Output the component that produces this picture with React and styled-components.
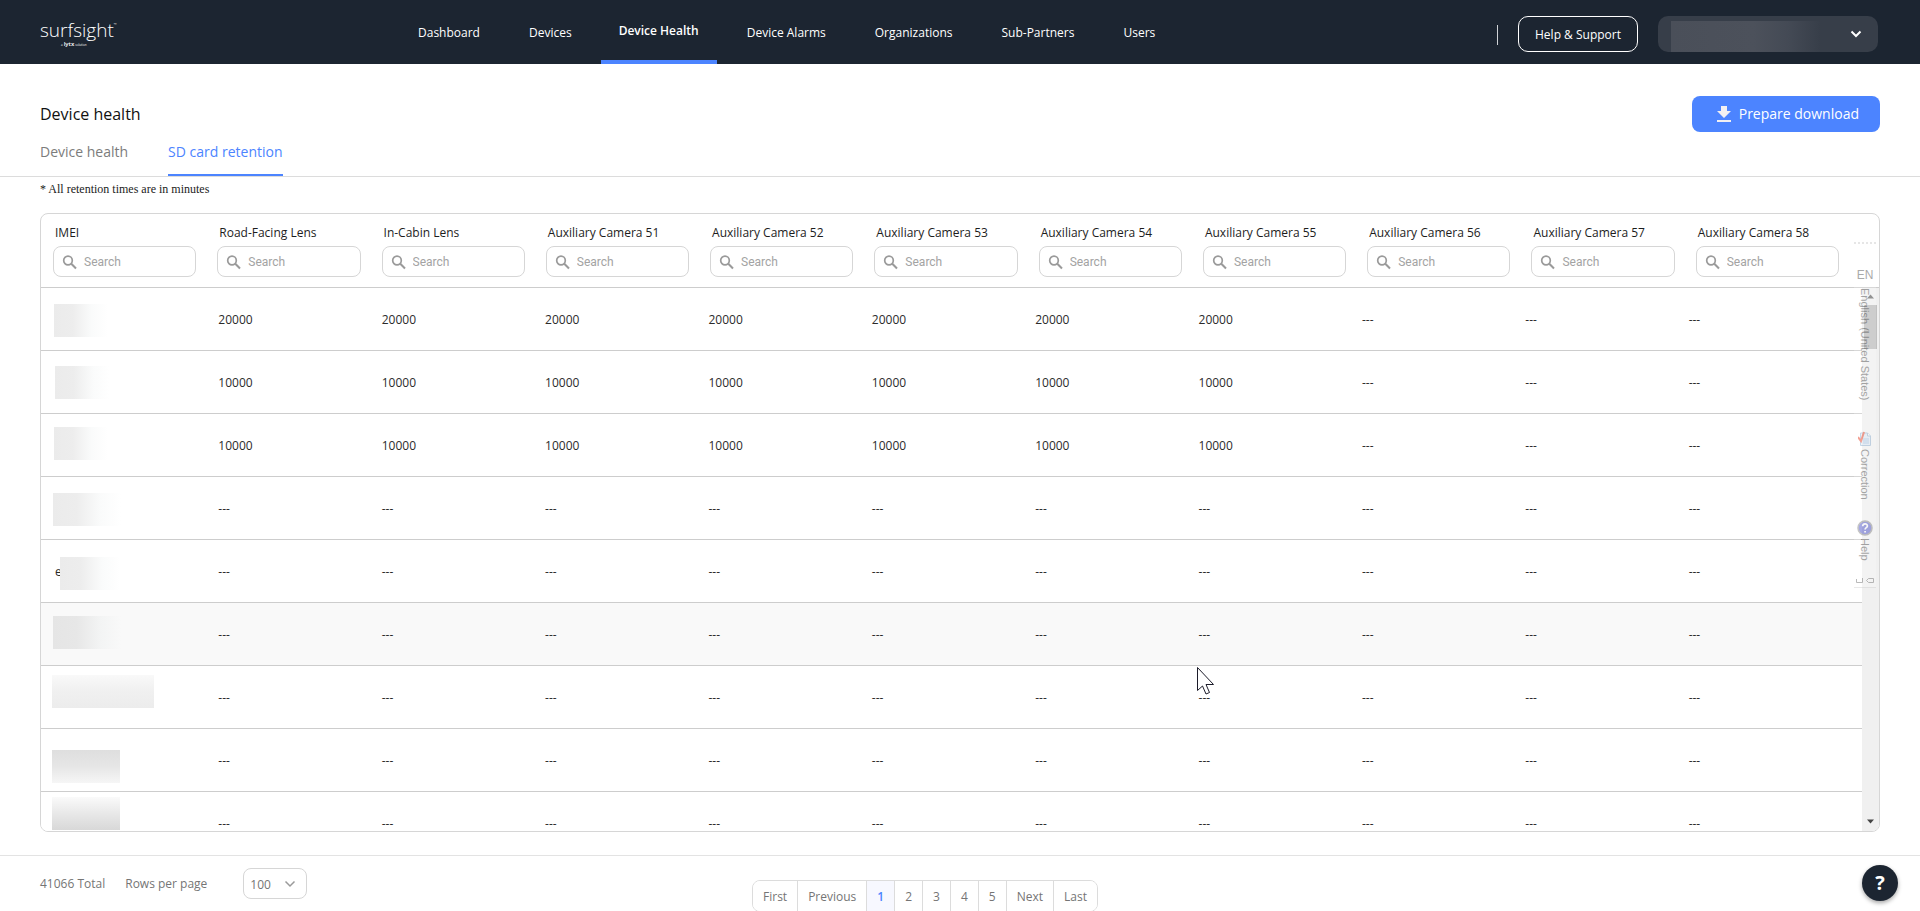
import React from "react";
import styled, { createGlobalStyle, css } from "styled-components";

const Global = createGlobalStyle`
  * { box-sizing: border-box; }
  html, body, #root { height: 100%; }
  body {
    margin: 0;
    overflow: hidden;
    background: #fff;
    color: #2b2b2b;
    font-family: "Open Sans", "Noto Sans", sans-serif;
    font-size: 12px;
  }
  button, input, select { font: inherit; color: inherit; }
`;

const Page = styled.div`
  position: relative;
  display: flex;
  flex-direction: column;
  height: 100vh;
  overflow: hidden;
`;

/* Top bar */
const TopBar = styled.header`
  display: flex;
  flex: none;
  align-items: center;
  height: 64px;
  padding: 0 42px 0 40px;
  background: #1c2531;
  color: #fff;
`;
const LogoLink = styled.a`
  display: flex;
  flex-direction: column;
  width: 359px;
  padding-top: 4px;
  color: #fff;
  text-decoration: none;
`;
const LogoWord = styled.span`
  display: flex;
  align-items: flex-start;
  height: 21px;
  font-size: 19px;
  font-weight: 300;
  line-height: 20px;
`;
const LogoMark = styled.span`
  font-size: 4px;
  line-height: 10px;
`;
const LogoTagline = styled.span`
  display: flex;
  align-items: baseline;
  gap: 1px;
  padding-left: 21px;
  font-size: 3px;
  line-height: 6px;
  b { font-size: 6px; font-weight: 600; }
`;
const Nav = styled.nav`
  display: flex;
  flex: 1;
  align-self: stretch;
  gap: 10px;
`;
const NavLink = styled.a`
  display: flex;
  align-items: center;
  padding: 1px 19px 0 20px;
  color: #fff;
  font-size: 12px;
  font-weight: 500;
  text-decoration: none;
  &:first-child { padding-left: 19px; }
  ${(p) =>
    p.$active &&
    css`
      padding: 1px 18px 0;
      border-bottom: 4px solid #4c84ff;
      font-weight: 600;
    `}
`;
const BarDivider = styled.span`
  width: 1px;
  height: 20px;
  margin: 6px 20px 0 0;
  background: #cfd2d6;
`;
const HelpButton = styled.button`
  width: 120px;
  height: 36px;
  margin: 4px 20px 0 0;
  border: 1px solid #fff;
  border-radius: 10px;
  background: transparent;
  font-size: 12px;
  font-weight: 500;
`;
const AccountButton = styled.button`
  display: flex;
  align-items: flex-end;
  justify-content: space-between;
  width: 220px;
  height: 36px;
  margin-top: 4px;
  padding: 0 16px 0 13px;
  border: 0;
  border-radius: 10px;
  background: #373e49;
  svg { align-self: center; }
`;
const AccountMask = styled.span`
  width: 150px;
  height: 31px;
  background: linear-gradient(90deg, #4a4f59 0%, #4c515b 55%, #444a55 78%, #373e49 100%);
`;

/* Heading */
const Heading = styled.section`
  display: flex;
  flex: none;
  align-items: flex-start;
  justify-content: space-between;
  height: 113px;
  padding: 32px 40px 0;
  border-bottom: 1px solid #dcdcdc;
`;
const Title = styled.h1`
  margin: 7px 0 0;
  color: #111;
  font-size: 16px;
  font-weight: 400;
  line-height: 22px;
`;
const Tabs = styled.div`
  display: flex;
  gap: 40px;
  height: 51px;
  align-items: stretch;
`;
const Tab = styled.a`
  padding-top: 17px;
  border-bottom: 2px solid ${(p) => (p.$active ? "#4c84ff" : "transparent")};
  color: ${(p) => (p.$active ? "#4c84ff" : "#7c7c7c")};
  font-size: 14px;
  line-height: 20px;
  text-decoration: none;
`;
const DownloadButton = styled.button`
  display: flex;
  align-items: center;
  gap: 8px;
  height: 36px;
  padding: 0 21px 0 25px;
  border: 0;
  border-radius: 8px;
  background: #4c84ff;
  color: #fff;
  font-size: 14px;
  line-height: 20px;
`;

/* Table */
const Note = styled.p`
  flex: none;
  margin: 4px 40px 16px;
  color: #222;
  font-family: "Liberation Serif", serif;
  font-size: 12px;
  line-height: 16px;
`;
const Card = styled.section`
  display: flex;
  flex: 1;
  flex-direction: column;
  min-height: 0;
  margin: 0 40px 23px;
  border: 1px solid #d6d6d6;
  border-radius: 8px;
  overflow: hidden;
`;
const HeadTable = styled.table`
  display: block;
  flex: none;
  border-bottom: 1px solid #cdcdcd;
  thead { display: block; }
`;
const HeadRow = styled.tr`
  display: grid;
  grid-template-columns: repeat(11, minmax(0, 1fr));
  height: 73px;
  padding-right: 31px;
`;
const HeadCell = styled.th`
  padding: 10px 9px 0 12px;
  color: #1d1d1d;
  text-align: left;
  font-size: 12px;
  font-weight: 500;
  line-height: 18px;
  label { display: block; padding-left: 2px; white-space: nowrap; }
`;
const SearchBox = styled.div`
  display: flex;
  align-items: center;
  gap: 6px;
  height: 31px;
  margin-top: 4px;
  padding: 0 8px;
  border: 1px solid #d6d6d6;
  border-radius: 8px;
  svg { flex: none; }
  input {
    flex: 1;
    min-width: 0;
    padding: 0;
    border: 0;
    outline: 0;
    background: transparent;
    font-family: Roboto, sans-serif;
    font-size: 12px;
    font-weight: 400;
  }
  input::placeholder { color: #a3a3a3; opacity: 1; }
`;
const ScrollArea = styled.div`
  display: flex;
  flex: 1;
  min-height: 0;
`;
const BodyTable = styled.table`
  display: block;
  flex: 1;
  overflow: hidden;
  tbody { display: block; }
`;
const BodyRow = styled.tr`
  display: grid;
  grid-template-columns: repeat(11, minmax(0, 1fr));
  height: 63px;
  padding-right: 24px;
  border-bottom: 1px solid #cdcdcd;
  background: ${(p) => (p.$hover ? "#f9f9f9" : "#fff")};
`;
const Cell = styled.td`
  position: relative;
  display: flex;
  align-items: center;
  padding: 0 0 0 14px;
  color: #2b2b2b;
  font-size: 12px;
`;
const fades = {
  right: "linear-gradient(90deg, #ebebeb 0%, #ededed 35%, #fafbfb 70%, rgba(255,255,255,0) 100%)",
  rightDark: "linear-gradient(90deg, #e5e5e5 0%, #e7e7e7 35%, #f3f4f4 70%, rgba(249,249,249,0) 100%)",
  up: "linear-gradient(0deg, #ececec 0%, #f0f0f0 50%, #f9f9f9 100%)",
  down: "linear-gradient(180deg, #dedede 0%, #e6e6e6 50%, #f6f6f6 100%)",
  upDark: "linear-gradient(0deg, #d8d8d8 0%, #e8e8e8 50%, #fafafa 100%)",
};
const Mask = styled.span`
  position: absolute;
  top: ${(p) => p.$top}px;
  left: ${(p) => p.$left}px;
  width: ${(p) => p.$width}px;
  height: 33px;
  background: ${(p) => fades[p.$fade]};
`;
const Scrollbar = styled.div`
  display: flex;
  flex: none;
  flex-direction: column;
  align-items: center;
  width: 17px;
  padding: 6px 0 7px;
  background: #f0f0f0;
`;
const Thumb = styled.div`
  width: 13px;
  height: 44px;
  margin: 6px 0 auto;
  background: #c1c1c1;
`;

/* Floating writing-aid bar */
const SideBar = styled.aside`
  position: absolute;
  top: 242px;
  right: 44px;
  display: flex;
  flex-direction: column;
  align-items: center;
  width: 22px;
  height: 346px;
  border-top: 2px dotted #cfcfcf;
  border-bottom: 1px solid #d4d4d4;
  background: rgba(255, 255, 255, 0.4);
  color: #555;
  font-family: "Liberation Sans", sans-serif;
  font-size: 12px;
  opacity: 0.5;
`;
const SideLang = styled.span`
  margin: 24px 0 4px;
  line-height: 14px;
`;
const SideText = styled.span`
  height: ${(p) => p.$height}px;
  padding-top: 2px;
  font-size: 11px;
  line-height: 16px;
  writing-mode: vertical-rl;
  white-space: nowrap;
`;

const Pointer = styled.svg`
  position: absolute;
  top: 666px;
  left: 1196px;
`;

/* Footer */
const Footer = styled.footer`
  display: flex;
  flex: none;
  align-items: flex-start;
  height: 56px;
  padding: 12px 40px 0;
  border-top: 1px solid #e3e3e3;
  color: #757575;
  font-size: 12px;
`;
const FooterLeft = styled.div`
  display: flex;
  flex: 1;
  align-items: center;
  gap: 20px;
`;
const RowsSelect = styled.div`
  position: relative;
  display: flex;
  align-items: center;
  margin-left: 16px;
  select {
    width: 64px;
    height: 31px;
    padding: 1px 0 0 6px;
    appearance: none;
    border: 1px solid #d6d6d6;
    border-radius: 8px;
    background: transparent;
  }
  svg { position: absolute; right: 11px; pointer-events: none; }
`;
const Pages = styled.nav`
  display: flex;
  height: 32px;
  margin-top: 12px;
  border: 1px solid #dcdcdc;
  border-radius: 8px;
  overflow: hidden;
`;
const PageButton = styled.button`
  padding: 0 10px;
  border: 0;
  border-left: 1px solid #dcdcdc;
  background: ${(p) => (p.$active ? "#f7f8ff" : "#fff")};
  color: ${(p) => (p.$active ? "#4c84ff" : "#757575")};
  font-weight: ${(p) => (p.$active ? 600 : 400)};
  &:first-child { border-left: 0; }
`;
const FooterRight = styled.div`
  flex: 1;
  margin-right: 70px;
`;
const HelpBubble = styled.button`
  position: absolute;
  right: 22px;
  bottom: 10px;
  width: 36px;
  height: 36px;
  padding: 0;
  border: 0;
  border-radius: 50%;
  background: #1c2531;
  color: #fff;
  font-size: 20px;
  font-weight: 700;
  line-height: 36px;
  box-shadow: 0 2px 4px rgba(0, 0, 0, 0.35);
`;

const Chevron = ({ size = 12, color = "#fff", width = 2 }) => (
  <svg width={size} height={size} viewBox="0 0 12 12" fill="none" stroke={color} strokeWidth={width} aria-hidden="true">
    <path d="M1.5 3.5 6 8l4.5-4.5" />
  </svg>
);
const SearchIcon = () => (
  <svg width="16" height="16" viewBox="0 0 16 16" fill="none" stroke="#9a9a9a" aria-hidden="true">
    <circle cx="6" cy="6.500" r="4.300" strokeWidth="1.700" />
    <path d="M9.300 9.800l4.700 4.700" strokeWidth="2" />
  </svg>
);
const DownloadIcon = () => (
  <svg width="14" height="18" viewBox="0 0 14 18" fill="#f2f0f2" aria-hidden="true">
    <path d="M4 1h6v5h4l-7 7-7-7h4zM0 15h14v2H0z" />
  </svg>
);
const CorrectionIcon = () => (
  <svg width="14" height="16" viewBox="0 0 14 16" aria-hidden="true">
    <path d="M2.500 2h7l3 3v9.500h-10z" fill="#dceaf7" stroke="#8fb0d0" />
    <path d="M9.500 2v3h3" fill="#fff" stroke="#8fb0d0" />
    <path d="M5 8h6M5 10h6M5 12h6" stroke="#8db4e0" />
    <path d="M0 6l3 4 3-9" fill="none" stroke="#e8442a" strokeWidth="2" />
  </svg>
);
const QuestionIcon = () => (
  <svg width="16" height="16" viewBox="0 0 16 16" aria-hidden="true">
    <circle cx="8" cy="8" r="7" fill="#4f55c8" stroke="#8a8a8a" strokeWidth="1.500" />
    <path d="M5.700 6.300c0-3.300 4.700-3.200 4.700-.3 0 1.700-2.300 1.700-2.300 3.500M8.100 11v1.600" fill="none" stroke="#fff" strokeWidth="1.700" />
  </svg>
);
const ResizeIcon = () => (
  <svg width="20" height="7" viewBox="0 0 20 7" fill="none" stroke="#777" aria-hidden="true">
    <path d="M1.500 2v3.500h6V1M18.500 1.500h-5l-2 2 2 2h5z" />
  </svg>
);

const navItems = ["Dashboard", "Devices", "Device Health", "Device Alarms", "Organizations", "Sub-Partners", "Users"];
const columns = ["IMEI", "Road-Facing Lens", "In-Cabin Lens", ...[51, 52, 53, 54, 55, 56, 57, 58].map((n) => `Auxiliary Camera ${n}`)];
const retention = (value) => Array.from({ length: 10 }, (_, i) => (value && i < 7 ? value : "---"));
const rows = [
  { values: retention("20000"), mask: [16, 13, 54, "right"] },
  { values: retention("10000"), mask: [15, 14, 54, "right"] },
  { values: retention("10000"), mask: [13, 13, 54, "right"] },
  { values: retention(), mask: [16, 12, 68, "right"] },
  { values: retention(), mask: [17, 19, 60, "right"], imei: "e" },
  { values: retention(), mask: [13, 12, 68, "rightDark"], hover: true },
  { values: retention(), mask: [9, 11, 102, "up"] },
  { values: retention(), mask: [21, 11, 68, "down"] },
  { values: retention(), mask: [5, 11, 68, "upDark"] },
];
const pageLabels = ["First", "Previous", "1", "2", "3", "4", "5", "Next", "Last"];

export default function App() {
  return (
    <Page>
      <Global />
      <TopBar>
        <LogoLink href="#home">
          <LogoWord>surfsight<LogoMark>™</LogoMark></LogoWord>
          <LogoTagline>a <b>lytx</b> solution</LogoTagline>
        </LogoLink>
        <Nav>
          {navItems.map((item) => (
            <NavLink key={item} href="#nav" $active={item === "Device Health"}>{item}</NavLink>
          ))}
        </Nav>
        <BarDivider />
        <HelpButton>Help &amp; Support</HelpButton>
        <AccountButton aria-label="Account">
          <AccountMask />
          <Chevron />
        </AccountButton>
      </TopBar>

      <Heading>
        <div>
          <Title>Device health</Title>
          <Tabs>
            <Tab href="#health">Device health</Tab>
            <Tab href="#retention" $active>SD card retention</Tab>
          </Tabs>
        </div>
        <DownloadButton><DownloadIcon />Prepare download</DownloadButton>
      </Heading>

      <Note>* All retention times are in minutes</Note>

      <Card>
        <HeadTable>
          <thead>
            <HeadRow>
              {columns.map((name, i) => (
                <HeadCell key={name} scope="col">
                  <label htmlFor={`search-${i}`}>{name}</label>
                  <SearchBox>
                    <SearchIcon />
                    <input id={`search-${i}`} placeholder="Search" />
                  </SearchBox>
                </HeadCell>
              ))}
            </HeadRow>
          </thead>
        </HeadTable>
        <ScrollArea>
          <BodyTable>
            <tbody>
              {rows.map(({ values, mask, imei, hover }, r) => (
                <BodyRow key={r} $hover={hover}>
                  <Cell>
                    {imei}
                    <Mask $top={mask[0]} $left={mask[1]} $width={mask[2]} $fade={mask[3]} />
                  </Cell>
                  {values.map((value, i) => <Cell key={i}>{value}</Cell>)}
                </BodyRow>
              ))}
            </tbody>
          </BodyTable>
          <Scrollbar>
            <svg width="7" height="5" viewBox="0 0 7 5" fill="#777" aria-hidden="true"><path d="M0 4.500 3.500.5 7 4.500z" /></svg>
            <Thumb />
            <svg width="7" height="5" viewBox="0 0 7 5" fill="#444" aria-hidden="true"><path d="M0 .5h7L3.500 4.500z" /></svg>
          </Scrollbar>
        </ScrollArea>
      </Card>

      <Footer>
        <FooterLeft>
          <span>41066 Total</span>
          <label htmlFor="rows">Rows per page</label>
          <RowsSelect>
            <select id="rows" defaultValue="100"><option>100</option></select>
            <Chevron color="#9a9a9a" width={1.5} />
          </RowsSelect>
        </FooterLeft>
        <Pages aria-label="Pagination">
          {pageLabels.map((label) => (
            <PageButton key={label} $active={label === "1"}>{label}</PageButton>
          ))}
        </Pages>
        <FooterRight />
      </Footer>

      <SideBar>
        <SideLang>EN</SideLang>
        <SideText $height={145}>English (United States)</SideText>
        <CorrectionIcon />
        <SideText $height={73}>Correction</SideText>
        <QuestionIcon />
        <SideText $height={41}>Help</SideText>
        <ResizeIcon />
      </SideBar>
      <HelpBubble aria-label="Help">?</HelpBubble>
      <Pointer width="20" height="30" viewBox="0 0 20 30" fill="#fff" stroke="#1c1c2a" aria-hidden="true">
        <path d="M1.500 1.500v23l5-4.500 3.500 8 3.500-1.500-3.500-8h7.500z" />
      </Pointer>
    </Page>
  );
}
